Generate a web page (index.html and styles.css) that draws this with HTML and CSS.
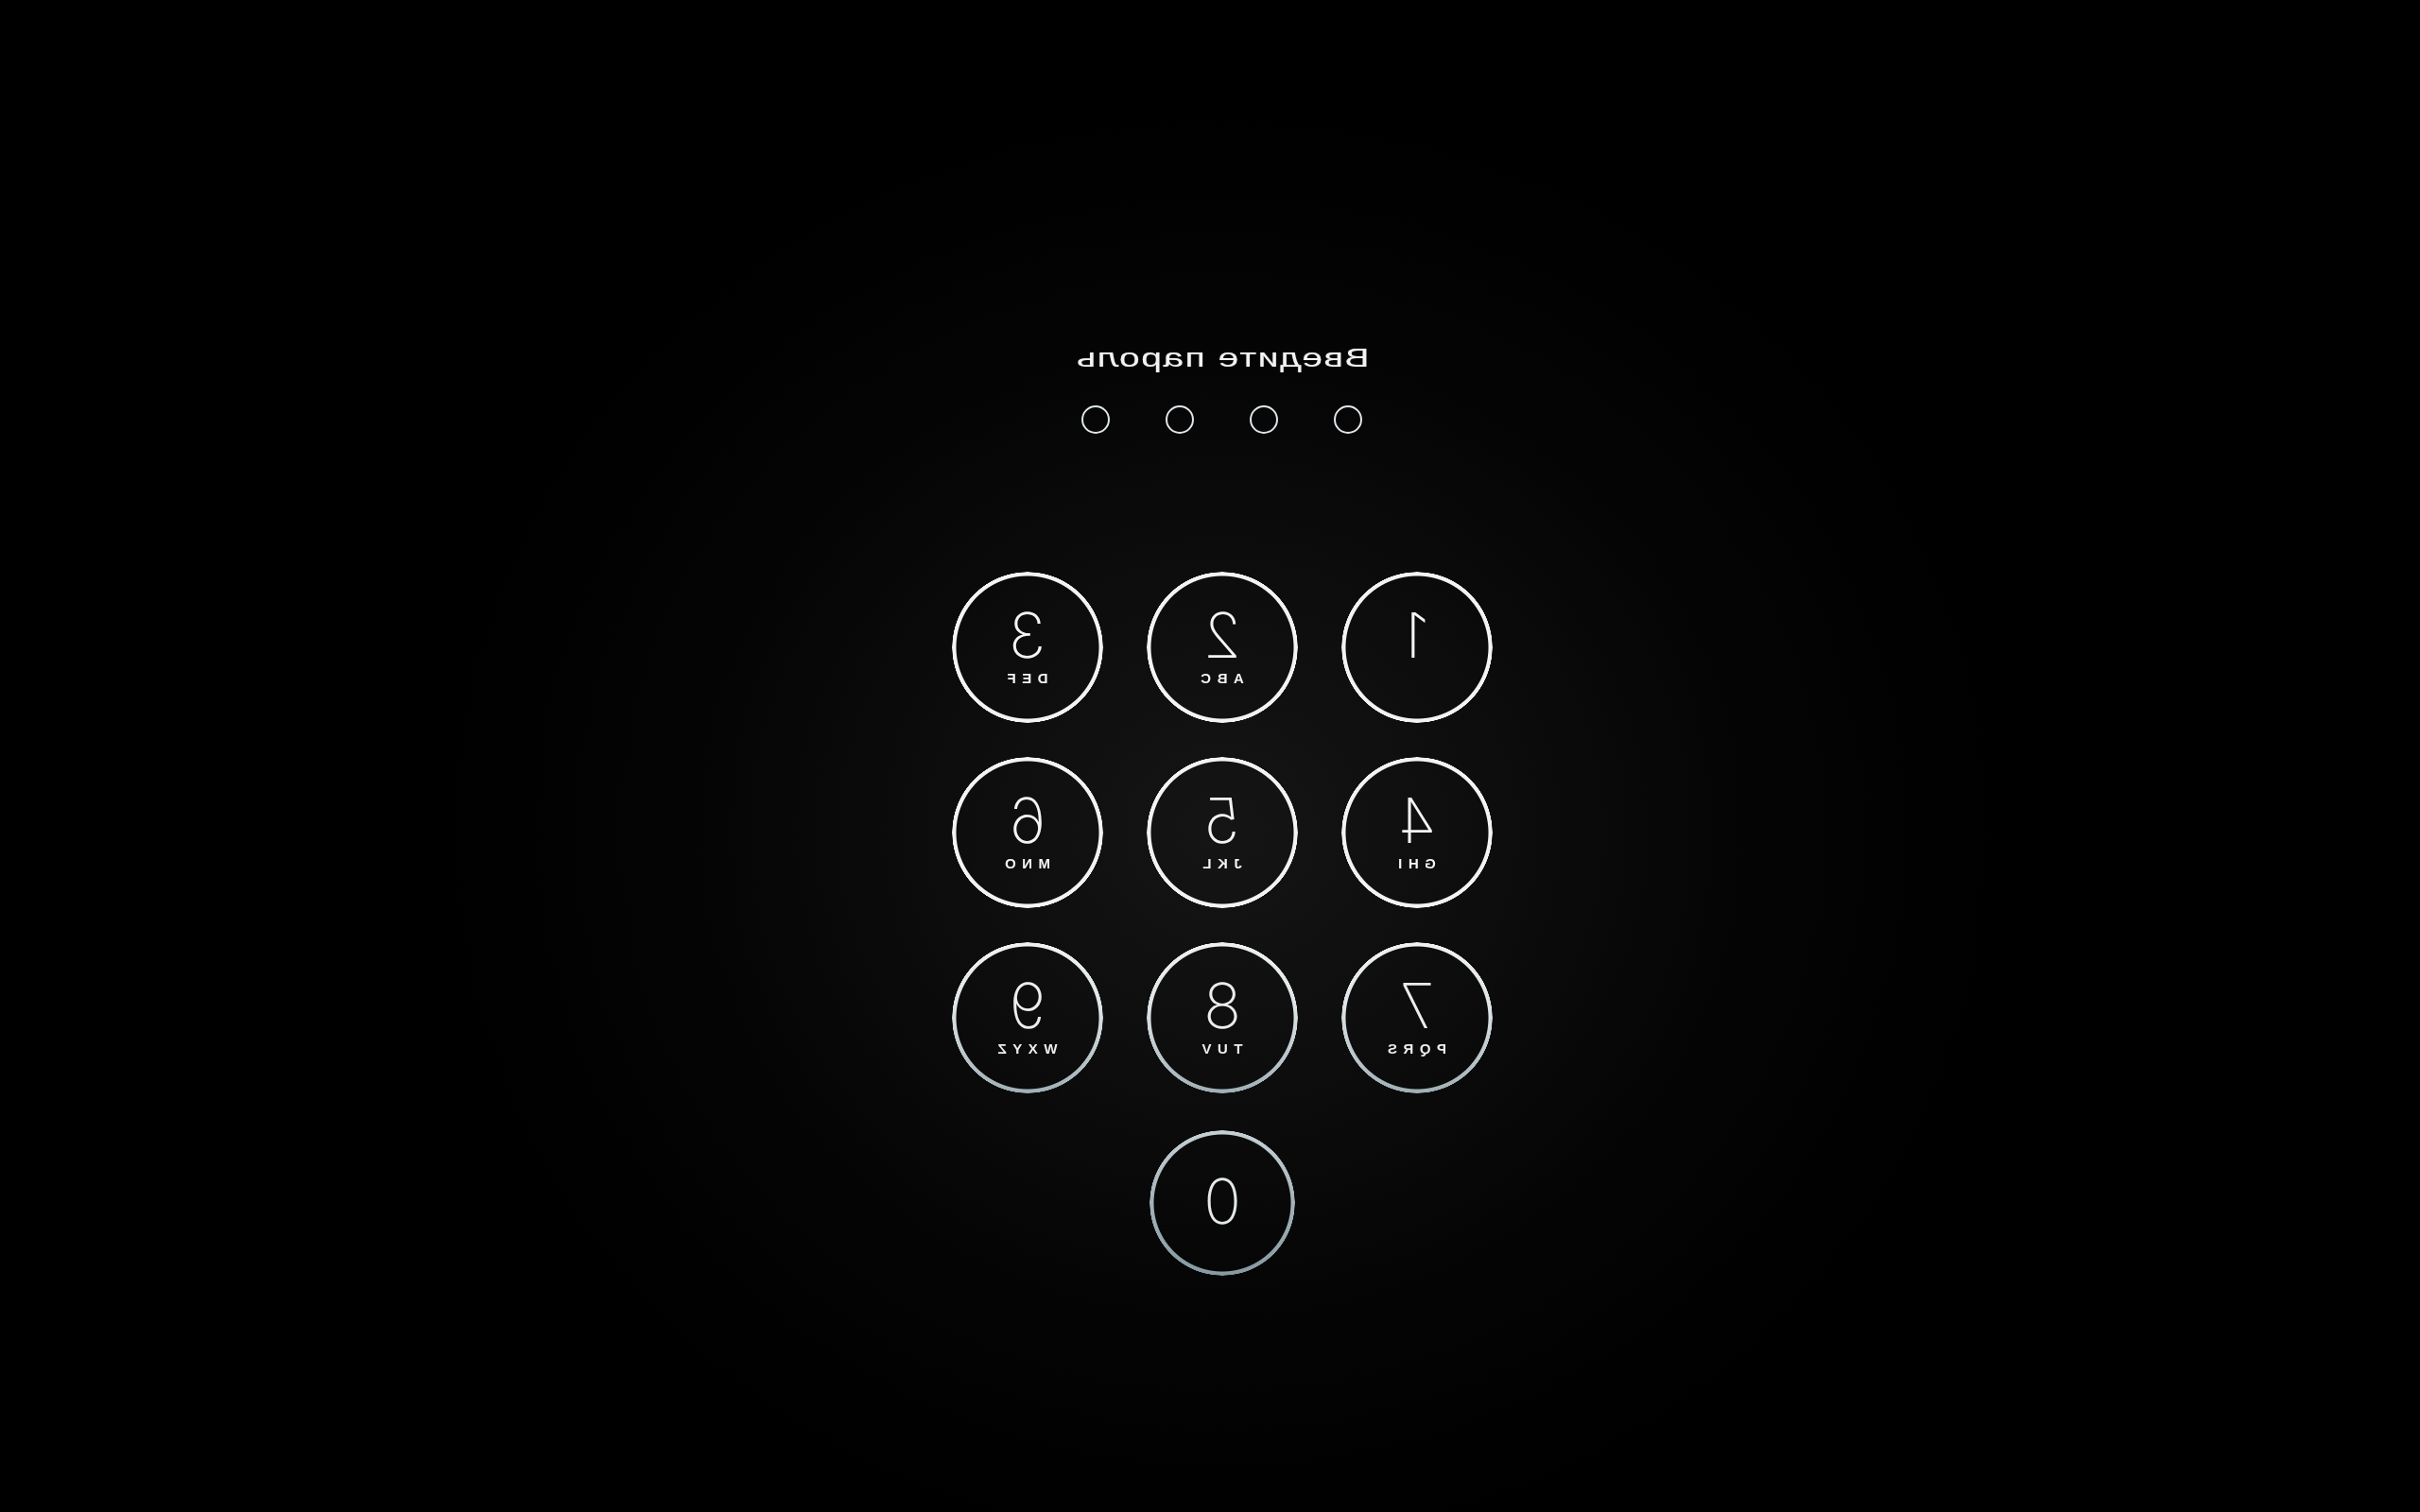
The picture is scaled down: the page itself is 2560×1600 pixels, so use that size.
FILE: index.html
```html
<!DOCTYPE html>
<html lang="ru">
<head>
<meta charset="utf-8">
<title>Введите пароль</title>
<link rel="stylesheet" href="styles.css">
</head>
<body>
<div class="page">
  <div class="lock">
    <div class="title">Введите пароль</div>
    <div class="dots">
      <span class="dot"></span><span class="dot"></span><span class="dot"></span><span class="dot"></span>
    </div>
    <div class="keypad">
      <div class="key r1"><span class="digit">1</span><span class="letters"></span></div>
      <div class="key r1"><span class="digit">2</span><span class="letters">ABC</span></div>
      <div class="key r1"><span class="digit">3</span><span class="letters">DEF</span></div>
      <div class="key r2"><span class="digit">4</span><span class="letters">GHI</span></div>
      <div class="key r2"><span class="digit">5</span><span class="letters">JKL</span></div>
      <div class="key r2"><span class="digit">6</span><span class="letters">MNO</span></div>
      <div class="key r3"><span class="digit">7</span><span class="letters">PQRS</span></div>
      <div class="key r3"><span class="digit">8</span><span class="letters">TUV</span></div>
      <div class="key r3"><span class="digit">9</span><span class="letters">WXYZ</span></div>
      <div class="key r4 zero"><span class="digit">0</span></div>
    </div>
  </div>
</div>
</body>
</html>
```
FILE: styles.css
```css
html, body {
  margin: 0;
  padding: 0;
}
body {
  width: 2560px;
  height: 1600px;
  overflow: hidden;
  background: #000;
  background-image: radial-gradient(ellipse 820px 760px at 1292px 880px, #151515 0%, #0d0d0d 35%, #050505 65%, #000 100%);
  font-family: "Liberation Sans", Arial, sans-serif;
  color: #f2f2f2;
}
.page {
  display: flex;
  justify-content: center;
  padding-left: 26px;
  padding-top: 361px;
}
.lock {
  display: flex;
  flex-direction: column;
  align-items: center;
  transform: scaleX(-1);
}
.title {
  font-size: 28px;
  line-height: 36px;
  letter-spacing: 1px;
  color: #f3f3f3;
  transform: scaleX(1.4);
  text-shadow: 0 0 1px rgba(255, 255, 255, 0.45);
}
.dots {
  display: flex;
  gap: 59px;
  margin-top: 32px;
}
.dot {
  width: 30px;
  height: 30px;
  box-sizing: border-box;
  border: 2.5px solid #dfe6ea;
  border-radius: 50%;
}
.keypad {
  margin-top: 146px;
  display: grid;
  grid-template-columns: repeat(3, 160px);
  grid-auto-rows: 160px;
  column-gap: 46px;
  row-gap: 36px;
}
.key {
  position: relative;
  display: flex;
  flex-direction: column;
  align-items: center;
  padding-top: 34px;
  box-sizing: border-box;
  color: #f4f4f4;
}
.key::before {
  content: "";
  position: absolute;
  inset: 0;
  border-radius: 50%;
  background: #f3f3f3;
  -webkit-mask: radial-gradient(closest-side, transparent calc(100% - 5px), #000 calc(100% - 4px), #000 calc(100% - 0.5px), transparent 100%);
  mask: radial-gradient(closest-side, transparent calc(100% - 5px), #000 calc(100% - 4px), #000 calc(100% - 0.5px), transparent 100%);
}
.key.r3::before {
  background: linear-gradient(#f0f2f2 0%, #dde3e5 45%, #9fb0b5 100%);
}
.key.r3 {
  color: #eceeee;
}
.key.r4::before {
  background: linear-gradient(#c6d0d3 0%, #a0b0b6 55%, #8599a0 100%);
}
.key.r4 {
  color: #e4e8ea;
}
.zero {
  grid-column: 2;
  width: 154px;
  height: 154px;
  justify-self: center;
  align-self: center;
  padding-top: 42px;
}
.digit {
  font-family: Inter, "Liberation Sans", sans-serif;
  font-weight: 250;
  font-size: 66px;
  line-height: 66px;
}
.letters {
  margin-top: 6px;
  height: 14px;
  font-family: "Liberation Sans", Arial, sans-serif;
  font-weight: 700;
  font-size: 15px;
  line-height: 14px;
  letter-spacing: 6.5px;
  padding-left: 6.5px;
}
```
